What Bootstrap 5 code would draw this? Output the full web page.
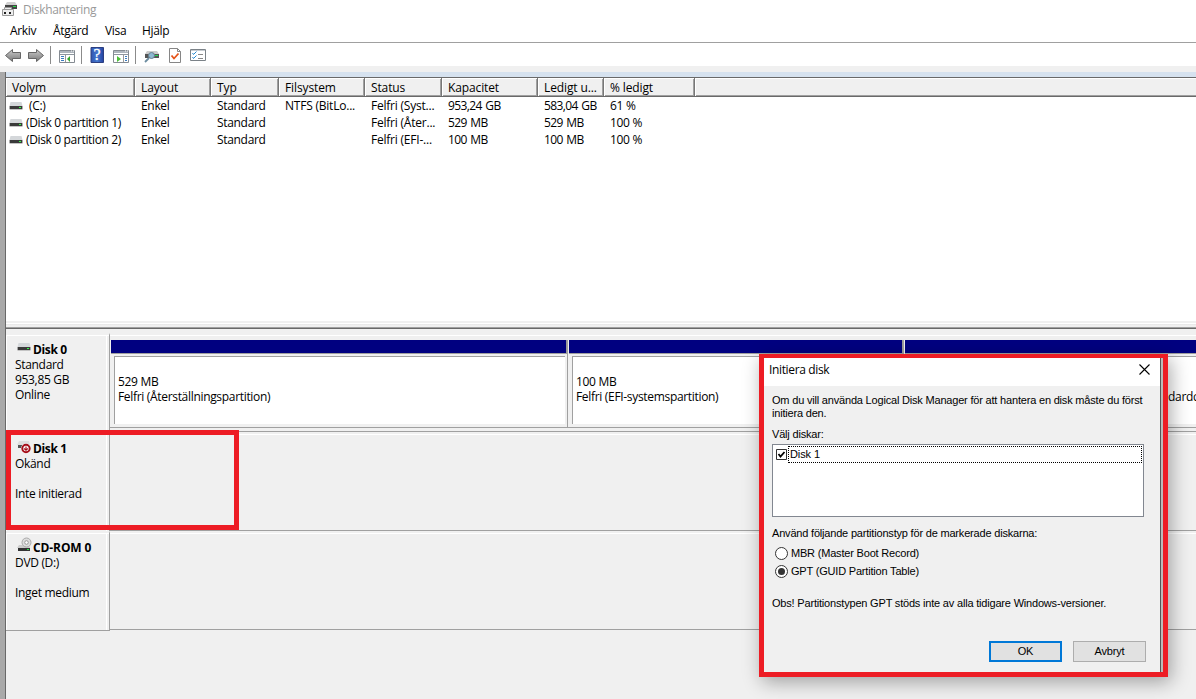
<!DOCTYPE html>
<html lang="sv">
<head>
<meta charset="utf-8">
<title>Diskhantering</title>
<link href="https://cdn.jsdelivr.net/npm/bootstrap@5.3.0/dist/css/bootstrap.min.css" rel="stylesheet">
<style>
body{width:1196px;height:699px;overflow:hidden;background:#f0f0f0;color:#000;font:12px/15px "Open Sans","Noto Sans",sans-serif;letter-spacing:-.32px;white-space:nowrap}
svg{display:block;flex:none}
.titlebar{height:19px;padding:0 0 1px 2px;color:#999;letter-spacing:-.38px}
.menus{height:23px;padding:0 0 1px 10px}
.menus span:nth-child(1){width:43px}.menus span:nth-child(2){width:52px}.menus span:nth-child(3){width:37px}
.tools{height:24px;border-top:1px solid #a0a0a0}
.tools svg{width:210px;height:23px}
.work{margin-top:6px;height:627px}
.gutter{width:5px;background:#a9a9a9}
.pane{border-left:1px solid #696969;width:1191px}
.strip{height:5px;background:#d6e2ef}
.listhead{height:20px;border-top:1px solid #696969;border-bottom:1px solid #696969;background:#f0f0f0}
.listhead>div{border-right:1px solid #777;box-shadow:inset 1px 1px #fff,inset -1px -1px #a0a0a0;padding:2px 0 0 6px;letter-spacing:-.12px}
.volumes{height:224px}
.volumes .line{height:17px;line-height:17px}
.c1{width:129px}.c2{width:76px}.c3{width:68px}.c4{width:86px}.c5{width:77px}.c6{width:96px}.c7{width:66px}.c8{width:91px}
.line>div{padding-left:6px}
.line>.c1{padding-left:3px;letter-spacing:-.35px}
.line>.c5,.line>.c4{letter-spacing:-.22px}
.line>.c6,.line>.c7{letter-spacing:-.6px;word-spacing:1px}
.splitter{height:8px;background:linear-gradient(#f0f0f0 2px,#fff 2px,#fff 3px,#e3e3e3 3px,#f0f0f0 4px,#f0f0f0 6px,#a0a0a0 6px,#a0a0a0 7px,#696969 7px)}
.disk{height:99px}
.disk-info{flex:none;width:104px;border-right:1px solid #a0a0a0;border-top:2px solid #f0f0f0;padding:7px 0 0 9px;box-shadow:inset 0 1px #fff,inset 1px 0 #fff,inset -2px 0 #f0f0f0,inset -3px 0 #fff}
.disk-info.last-info{height:100px;border-bottom:1px solid #a0a0a0}
.disk-info b{letter-spacing:-.35px;font-weight:700}
.disk-info.last-info b{letter-spacing:-.1px}
.disk-info svg{margin-left:2px;margin-right:2px}
.disk-body{min-width:0;border-top:2px solid #f0f0f0;border-bottom:1px solid #a0a0a0;box-shadow:inset 0 1px #fff}
.shelf{height:93px;padding-top:5px;border-bottom:1px solid #a0a0a0;padding-left:1px}
.part{flex:none;border-right:1px solid #a0a0a0}
.bar{height:13px;background:#000080;border-right:1px solid #999}
.under{height:3px;border-top:1px solid #a0a0a0}
.vol{margin:0 2px 3px 3px;height:68px;background:#fff;border-left:1px solid #a0a0a0;border-top:1px solid #a0a0a0;padding:17px 0 0 3px}
.marker{position:absolute;left:6px;top:430px;width:233px;height:100px;border:5px solid #ed1c24}
.dialogbox{position:absolute;left:759px;top:354px;width:409px;height:323px;border:5px solid #ed1c24;border-top-width:4px;background:#f0f0f0;box-shadow:3px 5px 18px #0005;font:11px/13px "Liberation Sans",Arial,sans-serif;letter-spacing:-.19px}
.dlg-main{width:396px;flex:none}
.edge{width:3px;flex:none;background:#bbb;border-left:1px solid #555}
.dlg-title{height:28px;background:#fff;font:12px/15px "Open Sans",sans-serif;letter-spacing:-.35px;padding:0 10px 5px 5px}
.dlg-body{padding:8px 14px 0 8px}
.choices{width:372px;height:73px;background:#fff;border:1px solid #828790;margin-top:3px;padding:1px}
.focusline{width:355px;height:17px;border:1px dotted #000;padding:1px 0 0 1px;letter-spacing:-.1px}
.opt svg{margin:0 3px}
.dlg-btn{width:73px;height:21px;background:#e1e1e1;border:1px solid #adadad;border-radius:0;padding:0;font:inherit;letter-spacing:-.2px;color:#000}
.dlg-btn.main{border:2px solid #0078d7}
</style>
<script src="https://cdn.jsdelivr.net/npm/bootstrap@5.3.0/dist/js/bootstrap.bundle.min.js"></script>
</head>
<body>
<svg width="0" height="0" style="position:absolute"><defs>
<linearGradient id="g" x1="0" y1="0" x2="0" y2="1"><stop stop-color="#ccc"/><stop offset="1" stop-color="#777"/></linearGradient>
<linearGradient id="bl"><stop stop-color="#3155b0"/><stop offset=".5" stop-color="#4478cf"/><stop offset="1" stop-color="#2440a0"/></linearGradient>
<symbol id="drive" viewBox="0 0 14 8"><path d="M1.500 0h11l1 4H.5z" fill="#d4d7da"/><path d="M.5 4h13v4H.5z" fill="#c4c4c4"/><path d="M.7 4h12.600v3H.7z" fill="#3a3a3a"/><path d="M10 5h2v1h-2z" fill="#3f4"/></symbol>
</defs></svg>
<header class="bg-white">
<div class="titlebar d-flex align-items-center"><svg width="17" height="16" viewBox="0 0 17 16"><path d="M5 1h8l2 3H3z" fill="#d0d0d0"/><path d="M3 4h12v4H3z" fill="#444"/><path d="M11 5h3v1h-3z" fill="#2d4"/><path d="M2.500 6.500h7v2h-7z" fill="#eee" stroke="#999"/><path d="M.5 8.500h11v6H.5z" fill="#eee" stroke="#999"/><path d="M2 11h2v2H2zM7 11h2v2H7z" fill="#222"/></svg><span class="ms-1">Diskhantering</span></div>
<div class="menus d-flex align-items-center"><span>Arkiv</span><span>Åtgärd</span><span>Visa</span><span>Hjälp</span></div>
<div class="tools"><svg viewBox="0 43 210 23">
<path d="M5.500 55.500l7-6v3h8v6h-8v3zM43.500 55.500l-7-6v3h-8v6h8v3z" fill="url(#g)" stroke="#666"/>
<path d="M50.500 46v18M81.500 46v18M135.500 46v18" stroke="#8b8b8b"/>
<g id="pan"><path d="M59.500 50.500h15v12h-15z" fill="#fff" stroke="#858b92"/><path d="M60 51h14v2H60z" fill="#aeb5bd"/><path d="M71 51h1M73 51h1" stroke="#fff"/><path d="M60 54.500h14" stroke="#8d959e"/></g>
<path d="M65.500 55v7" stroke="#999"/><path d="M61 56.500h3M61 58.500h3M61 60.500h3" stroke="#3a7bbf"/><path d="M70 56v6l-3-3z" fill="#31a62b"/>
<path d="M91 47.500h12.500v15H91z" fill="url(#bl)" stroke="#2c3f80"/><text x="93.500" y="60" font-family="Liberation Serif,serif" font-size="16" fill="#fff" stroke="#fff" stroke-width=".3" letter-spacing="0">?</text>
<use href="#pan" x="54"/><path d="M123.500 55v7" stroke="#999"/><path d="M125 56.500h2M125 58.500h2M125 60.500h2" stroke="#3a7bbf"/><path d="M117 56v6l4-3z" fill="#4cbf38"/>
<path d="M147 51h10l2 3h-14z" fill="#ccc"/><path d="M145 54h14v4h-14z" fill="#555"/><path d="M155 55h3v1h-3z" fill="#2d5"/><circle cx="151.500" cy="55.500" r="3" fill="#8db8d2" stroke="#66808e"/><path d="M149 58l-4 4" stroke="#6b8ca0" stroke-width="1.800"/>
<path d="M169.500 48.500h8l3 3v11h-11z" fill="#fff" stroke="#868686"/><path d="M177.500 48.500v3h3" fill="none" stroke="#868686"/><path d="M171.500 55.500l2.500 3 4.500-5" fill="none" stroke="#e65318" stroke-width="1.800"/>
<path d="M190.500 49.500h15v11h-15z" fill="#fff" stroke="#7b8288"/><path d="M191 50.500h14" stroke="#c6cbd0"/><path d="M192.500 53l1 1.500 3-3M192.500 57l1 1.500 3-3" fill="none" stroke="#2589d0"/><path d="M198 54.500h5M198 58.500h5" stroke="#888"/>
</svg></div>
</header>
<main class="work d-flex">
<div class="gutter"></div>
<div class="pane">
<div class="strip"></div>
<div class="listhead d-flex"><div class="c1">Volym</div><div class="c2">Layout</div><div class="c3">Typ</div><div class="c4">Filsystem</div><div class="c5">Status</div><div class="c6">Kapacitet</div><div class="c7">Ledigt u...</div><div class="c8">% ledigt</div><div class="flex-grow-1 border-end-0" style="box-shadow:inset 1px 1px #fff,inset 0 -1px #a0a0a0"></div></div>
<div class="volumes bg-white">
<div class="line d-flex"><div class="c1 d-flex align-items-center"><svg width="14" height="8"><use href="#drive"/></svg><span style="margin-left:6px">(C:)</span></div><div class="c2">Enkel</div><div class="c3">Standard</div><div class="c4">NTFS (BitLo...</div><div class="c5">Felfri (Syst...</div><div class="c6">953,24 GB</div><div class="c7">583,04 GB</div><div class="c8">61 %</div></div>
<div class="line d-flex"><div class="c1 d-flex align-items-center"><svg width="14" height="8"><use href="#drive"/></svg><span style="margin-left:3px">(Disk 0 partition 1)</span></div><div class="c2">Enkel</div><div class="c3">Standard</div><div class="c4"></div><div class="c5">Felfri (Åter...</div><div class="c6">529 MB</div><div class="c7">529 MB</div><div class="c8">100 %</div></div>
<div class="line d-flex"><div class="c1 d-flex align-items-center"><svg width="14" height="8"><use href="#drive"/></svg><span style="margin-left:3px">(Disk 0 partition 2)</span></div><div class="c2">Enkel</div><div class="c3">Standard</div><div class="c4"></div><div class="c5">Felfri (EFI-...</div><div class="c6">100 MB</div><div class="c7">100 MB</div><div class="c8">100 %</div></div>
</div>
<div class="splitter"></div>
<div style="height:4px"></div>
<section class="disk d-flex"><div class="disk-info"><div class="d-flex"><svg width="14" height="8" style="margin-top:1px"><use href="#drive"/></svg><b>Disk 0</b></div>Standard<br>953,85 GB<br>Online</div>
<div class="disk-body flex-grow-1"><div class="shelf d-flex">
<div class="part" style="width:457px"><div class="bar"></div><div class="under"></div><div class="vol">529 MB<br>Felfri (Återställningspartition)</div></div>
<div class="part" style="width:336px;padding-left:1px"><div class="bar"></div><div class="under"></div><div class="vol">100 MB<br>Felfri (EFI-systemspartition)</div></div>
<div class="flex-grow-1" style="padding-left:1px"><div class="bar border-0"></div><div class="under"></div><div class="vol me-0"><div style="margin-left:249px"><br>ndardc</div></div></div>
</div></div></section>
<section class="disk d-flex"><div class="disk-info"><div class="d-flex"><svg width="14" height="13" viewBox="0 0 14 13"><path d="M2 0h10l1 4H0z" fill="#ddd"/><path d="M1 4h4v3H1z" fill="#555"/><circle cx="9" cy="7.500" r="5" fill="#f4f4f4"/><circle cx="9" cy="7.500" r="3.700" fill="#fff" stroke="#a50d18" stroke-width="2"/><path d="M9 5.500v4M7.200 7.500L9 9.300l1.800-1.800" fill="none" stroke="#a50d18" stroke-width="1.100"/></svg><b>Disk 1</b></div>Okänd<br><br>Inte initierad</div><div class="disk-body flex-grow-1"></div></section>
<section class="disk d-flex"><div class="disk-info last-info"><div class="d-flex"><svg width="15" height="15" viewBox="0 0 15 15" style="margin-right:1px;margin-top:-3px;margin-bottom:3px"><path d="M2 8h10l1 3H0z" fill="#ccc"/><circle cx="9.500" cy="5.500" r="4.500" fill="#ddd" stroke="#aaa"/><circle cx="9.500" cy="5.500" r="1.800" fill="#fff" stroke="#999"/><path d="M1 11h12v3H1z" fill="#333"/><path d="M10 12h2v1h-2z" fill="#2d4"/></svg><b>CD-ROM 0</b></div>DVD (D:)<br><br>Inget medium</div><div class="disk-body flex-grow-1"></div></section>
</div>
</main>
<div class="marker"></div>
<div class="dialogbox d-flex">
<div class="dlg-main">
<div class="dlg-title d-flex align-items-center justify-content-between"><span>Initiera disk</span><svg width="11" height="11" viewBox="0 0 11 11"><path d="M.5.5l10 10M10.500.5l-10 10" stroke="#000" stroke-width="1.100"/></svg></div>
<div class="dlg-body">
<div>Om du vill använda Logical Disk Manager för att hantera en disk måste du först<br>initiera den.</div>
<div style="margin-top:8px">Välj diskar:</div>
<div class="choices"><div class="d-flex align-items-center"><svg style="margin:0 1px 0 2px" width="11" height="11" viewBox="0 0 11 11"><path d="M.5.5h10v10H.5z" fill="#fff" stroke="#333"/><path d="M2.500 5l2 2.500L8.500 3" fill="none" stroke="#000" stroke-width="1.800"/></svg><div class="focusline">Disk 1</div></div></div>
<div style="margin-top:10px">Använd följande partitionstyp för de markerade diskarna:</div>
<div class="opt d-flex align-items-center" style="margin-top:7px"><svg width="13" height="13"><circle cx="6.500" cy="6.500" r="6" fill="#fff" stroke="#333"/></svg>MBR (Master Boot Record)</div>
<div class="opt d-flex align-items-center" style="margin-top:5px"><svg width="13" height="13"><circle cx="6.500" cy="6.500" r="6" fill="#fff" stroke="#333"/><circle cx="6.500" cy="6.500" r="3.500" fill="#333"/></svg>GPT (GUID Partition Table)</div>
<div style="margin-top:19px">Obs! Partitionstypen GPT stöds inte av alla tidigare Windows-versioner.</div>
<div class="d-flex justify-content-end" style="gap:11px;margin-top:31px"><button class="btn dlg-btn main">OK</button><button class="btn dlg-btn">Avbryt</button></div>
</div>
</div>
<div class="edge"></div>
</div>
</body>
</html>
